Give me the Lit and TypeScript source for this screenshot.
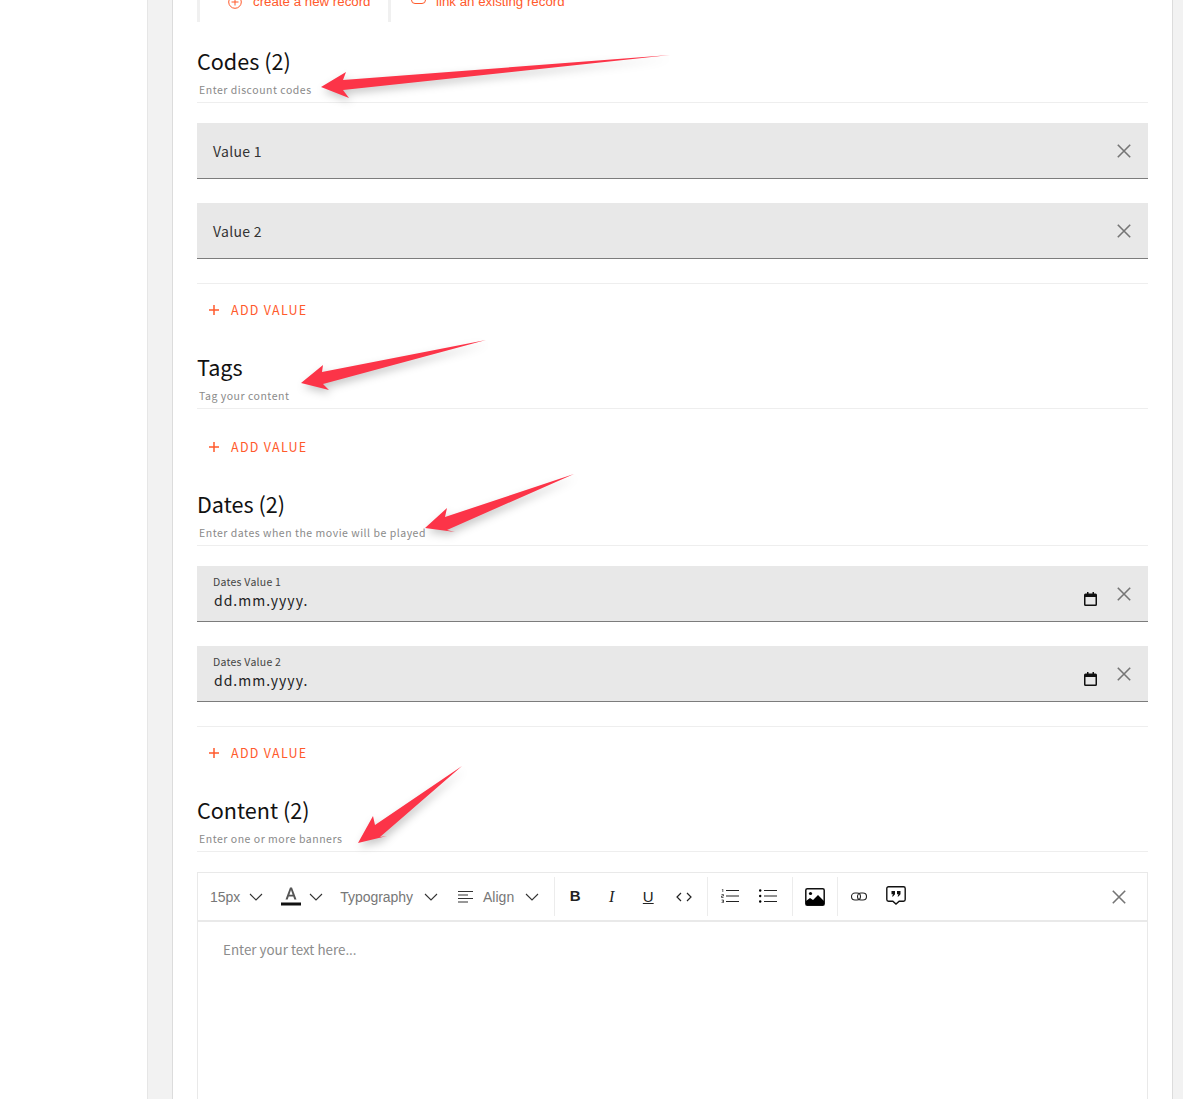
import { LitElement, html, css, svg } from "lit";
import { customElement } from "lit/decorators.js";

const close = html`<svg class="x" viewBox="0 0 14 14" width="14" height="14"><path d="M.8.8l12.4 12.4M13.2.8L.8 13.2" fill="none" stroke="#757575" stroke-width="1.6"/></svg>`;
const chev = html`<svg class="chev" viewBox="0 0 14 8" width="14" height="8"><path d="M1 1l6 6 6-6" fill="none" stroke="#333" stroke-width="1.1"/></svg>`;
const cal = html`<svg viewBox="0 0 13 14" width="13" height="14"><path d="M3 0h1.500v1.500h4V0H10v1.500h1.500A1.500 1.500 0 0 1 13 3v9.500a1.500 1.500 0 0 1-1.500 1.500h-10A1.500 1.500 0 0 1 0 12.500V3a1.500 1.500 0 0 1 1.500-1.500H3zM1.500 5v7.500h10V5z" fill="#111"/></svg>`;
const plus = html`<svg viewBox="0 0 10 10" width="10" height="10"><path d="M5 0v10M0 5h10" stroke="#ff5a2c" stroke-width="1.500" fill="none"/></svg>`;

@customElement("app-root")
export class AppRoot extends LitElement {
  static styles = css`
    :host { display: block; width: 1183px; height: 1099px; overflow: hidden; position: relative; background: #fff; font-family: "Noto Sans CJK JP", "Noto Sans", sans-serif; }
    .page { display: flex; height: 1099px; }
    .left { width: 147px; flex: none; }
    .gutter { width: 25px; flex: none; background: #f2f2f2; border-left: 1px solid #e6e6e6; box-sizing: border-box; }
    .card { width: 1001px; flex: none; box-sizing: border-box; padding: 0 24px; background: #fff; border-left: 1px solid #dcdcdc; border-right: 1px solid #dcdcdc; }
    .right { flex: 1; background: #f2f2f2; }
    .refs { display: flex; height: 42px; margin-top: -20px; }
    .ref { display: flex; align-items: center; border-left: 3px solid #f0f0f0; font: 13.300px/1 "Liberation Sans", sans-serif; color: #ff5a2c; height: 42px; box-sizing: border-box; padding-top: 2px; }
    .ref.a { width: 191px; padding-left: 28px; gap: 11px; }
    .ref.b { padding-left: 20px; gap: 10px; }
    .ref.b svg { margin-top: -6px; }
    .head { margin-top: 25px; height: 56px; box-sizing: border-box; border-bottom: 1px solid #eeeeee; }
    .title { font-size: 21.600px; line-height: 28px; color: #111; height: 30px; }
    .sub { font-size: 10.500px; line-height: 16px; height: 16px; margin: 5px 0 0 2px; color: #8a8a8a; letter-spacing: 0.52px; }
    .fields { margin-top: 20px; padding-bottom: 24px; border-bottom: 1px solid #eeeeee; display: flex; flex-direction: column; gap: 24px; }
    .field { height: 56px; box-sizing: border-box; background: #e8e8e8; border-bottom: 1px solid #7c7c7c; display: flex; align-items: center; padding: 0 17px 0 16px; }
    .grow { flex: 1; min-width: 0; }
    .stack { padding-bottom: 2px; }
    .val { font-size: 14px; color: #333; letter-spacing: 0.3px; }
    .lab { font-size: 10.500px; line-height: 15px; color: #444; letter-spacing: 0.25px; }
    .row { display: flex; justify-content: space-between; align-items: center; padding-right: 20px; }
    .row svg { margin-top: -3px; }
    .date { font-size: 14px; line-height: 22px; color: #222; letter-spacing: 1px; margin-left: 1px; }
    .add { display: flex; align-items: center; gap: 12px; height: 36px; margin: 8px 0 0 12px; font-size: 12.500px; color: #ff5a2c; letter-spacing: 1.280px; }
    .add span { margin-top: -2px; }
    .add.first { margin-top: 20px; }
    .editor { margin-top: 20px; height: 400px; box-sizing: border-box; border: 1px solid #e9e9e9; }
    .bar { height: 49px; box-sizing: border-box; border-bottom: 2px solid #e9e9e9; display: flex; align-items: center; font: 14px "Liberation Sans", sans-serif; color: #777; }
    .group { display: flex; align-items: center; height: 39px; border-right: 1px solid #ececec; box-sizing: border-box; }
    .g1 { width: 357px; padding-left: 12px; }
    .g2 { width: 153px; padding-left: 2px; }
    .g3 { width: 85px; padding-left: 3px; }
    .g4 { width: 45px; padding-left: 3px; }
    .g5 { flex: 1; padding-left: 2px; border: none; }
    .tool { display: flex; align-items: center; justify-content: center; width: 36.500px; color: #222; height: 24px; }
    .big { width: 38px; }
    .g5 .big { width: 37px; }
    .code { margin-left: -1px; }
    .t { white-space: nowrap; }
    .c { display: flex; }
    .bold { font: 700 15px "Liberation Sans", sans-serif; padding-bottom: 2px; }
    .it { font: italic 16px "Liberation Serif", serif; }
    .ul { font: 15px "Liberation Sans", sans-serif; text-decoration: underline; }
    .up { margin-top: -2px; }
    .barx { margin-right: 21px; display: flex; }
    .ph { padding: 17px 25px; font-size: 13.400px; line-height: 20px; color: #8c8c8c; }
    .arrows { position: absolute; left: 0; top: 0; pointer-events: none; filter: drop-shadow(2px 4px 4px rgba(0,0,0,.22)); }
  `;

  private head(title: string, sub: string) {
    return html`<div class="head"><div class="title">${title}</div><div class="sub">${sub}</div></div>`;
  }
  private add(first = false) {
    return html`<div class="add ${first ? "first" : ""}">${plus}<span>ADD VALUE</span></div>`;
  }

  render() {
    return html`
      <div class="page">
        <div class="left"></div>
        <div class="gutter"></div>
        <div class="card">
          <div class="refs">
            <div class="ref a">
              <svg viewBox="0 0 14 14" width="14" height="14"><circle cx="7" cy="7" r="6.300" fill="none" stroke="#ff5a2c"/><path d="M7 3.500v7M3.500 7h7" stroke="#ff5a2c"/></svg>
              <span>create a new record</span>
            </div>
            <div class="ref b">
              <svg viewBox="0 0 15 10" width="15" height="10"><rect x=".5" y=".5" width="14" height="9" rx="3.500" fill="none" stroke="#ff5a2c"/><path d="M4.500 5h6" stroke="#ff5a2c"/></svg>
              <span>link an existing record</span>
            </div>
          </div>

          ${this.head("Codes (2)", "Enter discount codes")}
          <div class="fields">
            ${["Value 1", "Value 2"].map((v) => html`<div class="field"><div class="grow val">${v}</div>${close}</div>`)}
          </div>
          ${this.add()}

          ${this.head("Tags", "Tag your content")}
          ${this.add(true)}

          ${this.head("Dates (2)", "Enter dates when the movie will be played")}
          <div class="fields">
            ${["Dates Value 1", "Dates Value 2"].map((v) => html`
              <div class="field">
                <div class="grow stack">
                  <div class="lab">${v}</div>
                  <div class="row"><span class="date">dd.mm.yyyy.</span>${cal}</div>
                </div>
                ${close}
              </div>`)}
          </div>
          ${this.add()}

          ${this.head("Content (2)", "Enter one or more banners")}
          <div class="editor">
            <div class="bar">
              <div class="group g1">
                <span class="t">15px</span>
                <span class="c" style="margin-left:9px">${chev}</span>
                <svg style="margin-left:18px" viewBox="0 0 20 20" width="20" height="20"><path d="M4.500 12.500 L9 0.500h2l4.500 12h-2.200l-1-3H7.700l-1 3z M8.400 7.800h3.200L10 3z" fill="#555" fill-rule="evenodd"/><rect y="15.500" width="20" height="3" fill="#111"/></svg>
                <span class="c" style="margin-left:8px">${chev}</span>
                <span class="t" style="margin-left:17px;letter-spacing:-.05px">Typography</span>
                <span class="c" style="margin-left:11px">${chev}</span>
                <svg style="margin-left:20px" viewBox="0 0 16 14" width="16" height="14"><path d="M0 1.500h15M0 5h10M0 8.500h15M0 12h10" stroke="#333" stroke-width="1.200"/></svg>
                <span class="t" style="margin-left:9px">Align</span>
                <span class="c" style="margin-left:11px">${chev}</span>
              </div>
              <div class="group g2">
                <div class="tool bold">B</div>
                <div class="tool it">I</div>
                <div class="tool ul">U</div>
                <div class="tool code"><svg viewBox="0 0 16 10" width="16" height="10"><path d="M5 1L1 5l4 4M11 1l4 4-4 4" fill="none" stroke="#222" stroke-width="1.200"/></svg></div>
              </div>
              <div class="group g3">
                <div class="tool big up"><svg viewBox="0 0 18 14" width="18" height="14"><path d="M5 1.500h13M5 7h13M5 12.500h13" stroke="#222" stroke-width="1.100"/><path d="M.8 0h1v3M.5 5.500h2v1.500h-2v1.500h2M.5 11h2v1.200h-1 1v1.500h-2" fill="none" stroke="#222" stroke-width=".7"/></svg></div>
                <div class="tool big up"><svg viewBox="0 0 18 14" width="18" height="14"><path d="M5 1.500h13M5 7h13M5 12.500h13" stroke="#222" stroke-width="1.100"/><circle cx="1.200" cy="1.500" r="1.200"/><circle cx="1.200" cy="7" r="1.200"/><circle cx="1.200" cy="12.500" r="1.200"/></svg></div>
              </div>
              <div class="group g4">
                <div class="tool big"><svg viewBox="0 0 20 18" width="20" height="18"><rect x=".8" y=".8" width="18.400" height="16.400" rx="1.500" fill="#fff" stroke="#111" stroke-width="1.500"/><circle cx="5.500" cy="5.500" r="1.600"/><path d="M1 17v-4l4-3 3 2 5-5 6 6v4z"/></svg></div>
              </div>
              <div class="group g5">
                <div class="tool big"><svg viewBox="0 0 16 9" width="16" height="9"><rect x=".5" y="1" width="9" height="7" rx="3.500" fill="none" stroke="#222" stroke-width="1.100"/><rect x="6.500" y="1" width="9" height="7" rx="3.500" fill="none" stroke="#222" stroke-width="1.100"/></svg></div>
                <div class="tool big up"><svg viewBox="0 0 20 19" width="20" height="19"><path d="M2.500.8h15A1.700 1.700 0 0 1 19.200 2.500v11a1.700 1.700 0 0 1-1.700 1.700h-4.300L10 18l-3.200-2.800H2.500A1.700 1.700 0 0 1 .8 13.500v-11A1.700 1.700 0 0 1 2.500.8z" fill="none" stroke="#111" stroke-width="1.400"/><path d="M5.500 5h3.500v3.200L7 10.500H6l1-2.300H5.500zM11 5h3.500v3.200l-2 2.300h-1l1-2.300H11z" fill="#111"/></svg></div>
              </div>
              <div class="barx">${close}</div>
            </div>
            <div class="ph">Enter your text here...</div>
          </div>
        </div>
        <div class="right"></div>
      </div>
      <svg class="arrows" width="1183" height="1099" viewBox="0 0 1183 1099">
        ${[
          "670,55 343,80 346,72 321,87 349,98 343,90",
          "486,340 322,372 323,365 301,383 329,390 323,384",
          "574,474 445,517 447,508 425,528 455,532 447,530",
          "462,766 375,825 373,816 358,843 387,836 380,837",
        ].map((p) => svg`<polygon points=${p} fill="#fc3448"/>`)}
      </svg>
    `;
  }
}
